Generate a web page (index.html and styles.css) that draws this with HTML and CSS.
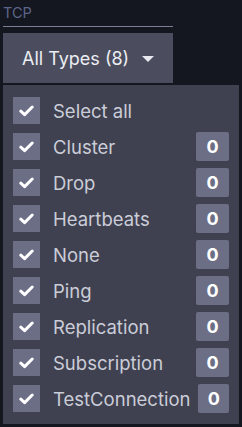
FILE: index.html
```html
<!DOCTYPE html>
<html>
<head>
<meta charset="utf-8">
<link rel="stylesheet" href="styles.css">
</head>
<body>
<div class="wrap">
  <div class="field">
    <div class="label">TCP</div>
  </div>
  <button class="select">
    <span>All Types (8)</span>
    <svg class="caret" width="12" height="6" viewBox="0 0 12 6"><path d="M0 0H12L6 6Z" fill="#e8e9ef"/></svg>
  </button>
  <div class="menu">
    <div class="row"><span class="cb"><svg width="15" height="12" viewBox="0 0 15 12"><path d="M1.8 6.2L5.6 9.6L13.2 2" fill="none" stroke="#fff" stroke-width="3" stroke-linecap="round" stroke-linejoin="round"/></svg></span><span class="name">Select all</span></div>
    <div class="row"><span class="cb"><svg width="15" height="12" viewBox="0 0 15 12"><path d="M1.8 6.2L5.6 9.6L13.2 2" fill="none" stroke="#fff" stroke-width="3" stroke-linecap="round" stroke-linejoin="round"/></svg></span><span class="name">Cluster</span><span class="badge">0</span></div>
    <div class="row"><span class="cb"><svg width="15" height="12" viewBox="0 0 15 12"><path d="M1.8 6.2L5.6 9.6L13.2 2" fill="none" stroke="#fff" stroke-width="3" stroke-linecap="round" stroke-linejoin="round"/></svg></span><span class="name">Drop</span><span class="badge">0</span></div>
    <div class="row"><span class="cb"><svg width="15" height="12" viewBox="0 0 15 12"><path d="M1.8 6.2L5.6 9.6L13.2 2" fill="none" stroke="#fff" stroke-width="3" stroke-linecap="round" stroke-linejoin="round"/></svg></span><span class="name">Heartbeats</span><span class="badge">0</span></div>
    <div class="row"><span class="cb"><svg width="15" height="12" viewBox="0 0 15 12"><path d="M1.8 6.2L5.6 9.6L13.2 2" fill="none" stroke="#fff" stroke-width="3" stroke-linecap="round" stroke-linejoin="round"/></svg></span><span class="name">None</span><span class="badge">0</span></div>
    <div class="row"><span class="cb"><svg width="15" height="12" viewBox="0 0 15 12"><path d="M1.8 6.2L5.6 9.6L13.2 2" fill="none" stroke="#fff" stroke-width="3" stroke-linecap="round" stroke-linejoin="round"/></svg></span><span class="name">Ping</span><span class="badge">0</span></div>
    <div class="row"><span class="cb"><svg width="15" height="12" viewBox="0 0 15 12"><path d="M1.8 6.2L5.6 9.6L13.2 2" fill="none" stroke="#fff" stroke-width="3" stroke-linecap="round" stroke-linejoin="round"/></svg></span><span class="name">Replication</span><span class="badge">0</span></div>
    <div class="row"><span class="cb"><svg width="15" height="12" viewBox="0 0 15 12"><path d="M1.8 6.2L5.6 9.6L13.2 2" fill="none" stroke="#fff" stroke-width="3" stroke-linecap="round" stroke-linejoin="round"/></svg></span><span class="name">Subscription</span><span class="badge">0</span></div>
    <div class="row"><span class="cb"><svg width="15" height="12" viewBox="0 0 15 12"><path d="M1.8 6.2L5.6 9.6L13.2 2" fill="none" stroke="#fff" stroke-width="3" stroke-linecap="round" stroke-linejoin="round"/></svg></span><span class="name">TestConnection</span><span class="badge">0</span></div>
  </div>
</div>
</body>
</html>
```
FILE: styles.css
```css
html, body {
  margin: 0;
  padding: 0;
  background: #141620;
  font-family: Inter, "Noto Sans", sans-serif;
}
.wrap {
  padding: 3px 3px 0 3px;
  display: flex;
  flex-direction: column;
  align-items: flex-start;
}
.field {
  width: 170px;
  box-sizing: border-box;
  height: 24px;
  border-bottom: 1px solid #7c7e94;
}
.label {
  font-size: 14.5px;
  color: #5d6689;
  line-height: 17px;
  padding-top: 1px;
}
.select {
  margin-top: 6px;
  width: 170px;
  height: 50px;
  background: #4b4d5e;
  border: none;
  border-radius: 0;
  padding: 0 0 0 19px;
  display: flex;
  align-items: center;
  gap: 13px;
  font-family: inherit;
  font-size: 18px;
  color: #eceef3;
  box-sizing: border-box;
}
.caret { display: block; margin-top: 1px; }
.menu {
  margin-top: 2px;
  width: 236px;
  box-sizing: border-box;
  background: #3f4150;
  padding: 12px 10px;
  display: flex;
  flex-direction: column;
  gap: 9px;
}
.row {
  height: 27px;
  display: flex;
  align-items: center;
}
.cb {
  width: 27px;
  height: 27px;
  flex: none;
  background: #6c6e86;
  display: flex;
  align-items: center;
  justify-content: center;
}
.cb svg { display: block; }
.name {
  margin-left: 13px;
  font-size: 18.5px;
  color: #cbcdd8;
  white-space: nowrap;
  flex: 1 1 auto;
}
.badge {
  width: 33px;
  height: 29px;
  flex: 0 1 33px;
  min-width: 0;
  background: #6c6e86;
  color: #ffffff;
  font-weight: 700;
  font-size: 18px;
  display: flex;
  align-items: center;
  justify-content: center;
  border-radius: 2px;
  margin-left: 8px;
}
```
